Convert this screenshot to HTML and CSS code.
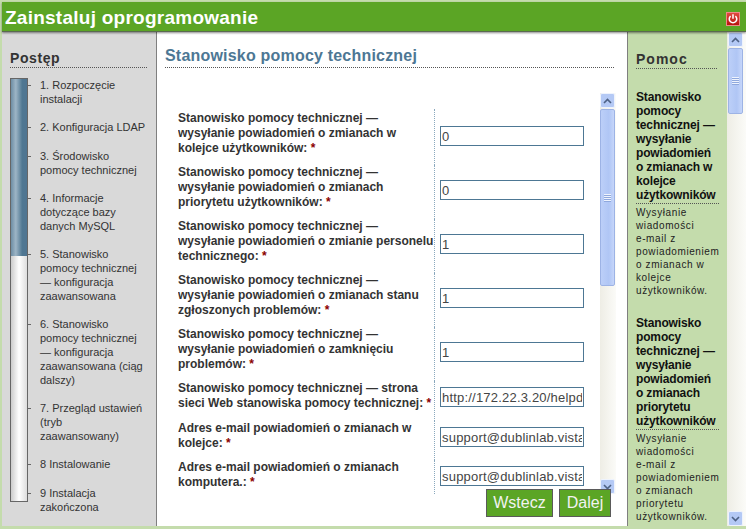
FILE: index.html
```html
<!DOCTYPE html>
<html lang="pl">
<head>
<meta charset="utf-8">
<title>Zainstaluj oprogramowanie</title>
<link rel="stylesheet" href="styles.css">
</head>
<body>
<div class="app">
  <header class="top">
    <h1>Zainstaluj oprogramowanie</h1>
    <span class="power">
      <svg viewBox="0 0 14 14" width="14" height="14"><path d="M4.2 3.6a4.4 4.4 0 1 0 5.6 0" fill="none" stroke="#fff" stroke-width="1.8"/><path d="M7 1.6v5" stroke="#fff" stroke-width="1.8"/></svg>
    </span>
  </header>
  <div class="columns">
    <aside class="progress">
      <h2 class="side-title">Postęp</h2>
      <div class="progress-body">
        <div class="bar"><div class="bar-fill"></div></div>
        <ol class="steps">
          <li class="s1">1. Rozpoczęcie instalacji</li>
          <li class="s2">2. Konfiguracja LDAP</li>
          <li class="s3">3. Środowisko pomocy technicznej</li>
          <li class="s4">4. Informacje dotyczące bazy danych MySQL</li>
          <li class="s5">5. Stanowisko pomocy technicznej — konfiguracja zaawansowana</li>
          <li class="s6">6. Stanowisko pomocy technicznej — konfiguracja zaawansowana (ciąg dalszy)</li>
          <li class="s7">7. Przegląd ustawień<br>(tryb<br>zaawansowany)</li>
          <li class="s8">8 Instalowanie</li>
          <li class="s9">9 Instalacja zakończona</li>
        </ol>
      </div>
    </aside>
    <main class="main">
      <h2 class="main-title">Stanowisko pomocy technicznej</h2>
      <div class="form-area">
        <div class="form">
          <div class="row r3"><label>Stanowisko pomocy technicznej — wysyłanie powiadomień o zmianach w kolejce użytkowników: <b>*</b></label><div class="cell"><input value="0"></div></div>
          <div class="row r3"><label>Stanowisko pomocy technicznej — wysyłanie powiadomień o zmianach priorytetu użytkowników: <b>*</b></label><div class="cell"><input value="0"></div></div>
          <div class="row r3"><label>Stanowisko pomocy technicznej — wysyłanie powiadomień o zmianie personelu technicznego: <b>*</b></label><div class="cell"><input value="1"></div></div>
          <div class="row r3"><label>Stanowisko pomocy technicznej — wysyłanie powiadomień o zmianach stanu zgłoszonych problemów: <b>*</b></label><div class="cell"><input value="1"></div></div>
          <div class="row r3"><label>Stanowisko pomocy technicznej — wysyłanie powiadomień o zamknięciu problemów: <b>*</b></label><div class="cell"><input value="1"></div></div>
          <div class="row r2"><label>Stanowisko pomocy technicznej — strona sieci Web stanowiska pomocy technicznej: <b>*</b></label><div class="cell"><input value="http://172.22.3.20/helpdesk"></div></div>
          <div class="row r2 tight"><label>Adres e-mail powiadomień o zmianach w kolejce: <b>*</b></label><div class="cell"><input value="support@dublinlab.vistaprint.net"></div></div>
          <div class="row r2"><label>Adres e-mail powiadomień o zmianach komputera.: <b>*</b></label><div class="cell"><input value="support@dublinlab.vistaprint.net"></div></div>
        </div>
        <div class="scrollbar form-scroll">
          <span class="sb-btn"><svg viewBox="0 0 9 6" width="9" height="6"><path d="M1 5l3.5-3.5L8 5" fill="none" stroke="#4D6185" stroke-width="1.6"/></svg></span>
          <span class="sb-thumb thumb-form"><i class="grip"></i></span>
          <span class="sb-rest"></span>
          <span class="sb-btn"><svg viewBox="0 0 9 6" width="9" height="6"><path d="M1 1l3.5 3.5L8 1" fill="none" stroke="#4D6185" stroke-width="1.6"/></svg></span>
        </div>
      </div>
      <div class="actions">
        <button class="btn back">Wstecz</button>
        <button class="btn next">Dalej</button>
      </div>
    </main>
    <aside class="help">
      <div class="help-text">
        <h2 class="side-title help-title">Pomoc</h2>
        <h3>Stanowisko pomocy technicznej — wysyłanie powiadomień o zmianach w kolejce użytkowników</h3>
        <p>Wysyłanie wiadomości <span class="nb">e-mail z</span> powiadomieniem o zmianach w kolejce użytkowników.</p>
        <h3>Stanowisko pomocy technicznej — wysyłanie powiadomień o zmianach priorytetu użytkowników</h3>
        <p>Wysyłanie wiadomości <span class="nb">e-mail z</span> powiadomieniem o zmianach priorytetu użytkowników.</p>
      </div>
      <div class="scrollbar help-scroll">
        <span class="sb-btn"><svg viewBox="0 0 9 6" width="9" height="6"><path d="M1 5l3.5-3.5L8 5" fill="none" stroke="#4D6185" stroke-width="1.6"/></svg></span>
        <span class="sb-thumb thumb-help"><i class="grip"></i></span>
        <span class="sb-rest"></span>
        <span class="sb-btn"><svg viewBox="0 0 9 6" width="9" height="6"><path d="M1 1l3.5 3.5L8 1" fill="none" stroke="#4D6185" stroke-width="1.6"/></svg></span>
      </div>
    </aside>
  </div>
</div>
</body>
</html>
```
FILE: styles.css
```css
* { box-sizing: border-box; }
html, body { margin: 0; padding: 0; }
body { width: 746px; height: 529px; overflow: hidden; background: #C4DCAC; font-family: "Liberation Sans", Arial, sans-serif; }
.app { width: 746px; height: 529px; padding: 2px 0 3px 2px; display: flex; flex-direction: column; }
.top { height: 30px; background: #5BA525; border-bottom: 1px solid #5a6a50; box-shadow: 0 1px 2px rgba(0,0,0,.45); display: flex; justify-content: space-between; align-items: flex-start; position: relative; z-index: 2; flex: none; }
.top h1 { margin: 5px 0 0 3px; font-size: 19px; line-height: 22px; font-weight: bold; color: #fff; letter-spacing: .25px; }
.power { width: 14px; height: 14px; margin: 10px 6px 0 0; background: linear-gradient(#E04A40, #B8140F); border: 1px solid #E88; display: flex; align-items: center; justify-content: center; }
.power svg { width: 12px; height: 12px; }
.columns { flex: 1; display: flex; min-height: 0; }
.progress { width: 155px; background: #D9D9D9; border-right: 1px solid #7f7f7f; padding: 18px 9px 0 8px; flex: none; }
.side-title { margin: 0; font-size: 14px; line-height: 17px; font-weight: bold; color: #333; letter-spacing: .6px; border-bottom: 1px dotted #555; height: 18px; }
.progress-body { display: flex; margin-top: 10px; }
.bar { width: 18px; height: 424px; border: 1px solid #666; background: linear-gradient(90deg, #ccc, #fff 50%, #ddd); flex: none; }
.bar-fill { height: 177px; background: linear-gradient(90deg, #6E8EA5, #9DB5C6 30%, #4F7792 70%, #4F7592); }
.steps { list-style: none; margin: 0; padding: 0 0 0 12px; font-size: 11px; line-height: 14px; color: #333; flex: 1; }
.steps li { position: relative; width: 108px; }
.steps li::before { content: ""; position: absolute; left: -12px; top: 7px; width: 3px; height: 1px; background: #666; }
.s2, .s4, .s5, .s6, .s7, .s8 { margin-top: 14px; }
.s3, .s9 { margin-top: 15px; }
.main { width: 470px; background: #fff; flex: none; position: relative; padding: 14px 13px 0 8px; }
.main-title { margin: 0; font-size: 16px; line-height: 20px; height: 22px; font-weight: bold; color: #4D7794; letter-spacing: .2px; border-bottom: 1px dotted #555; }
.form-area { display: flex; margin-top: 25px; height: 401px; padding-left: 13px; }
.form { width: 421px; height: 401px; overflow: hidden; padding-top: 16px; flex: none; }
.row { display: flex; }
.r3 { height: 54px; }
.r2 { height: 40px; }
.tight { height: 39px; }
.row:first-child { height: 56px; }
.row:first-child label { padding-top: 2px; }
.row:first-child .cell { padding-top: 17px; }
.row label { width: 256px; font-size: 12px; line-height: 15px; font-weight: bold; color: #333; flex: none; }
.row label b { color: #8B0000; }
.cell { width: 165px; border-left: 1px dotted #8aa8bd; padding: 6px 0 0 5px; }
.r3 .cell { padding-top: 15px; }
.cell input { display: block; width: 144px; height: 20px; border: 1px solid #4D7794; padding: 0 1px; font: 13px "Liberation Sans", Arial, sans-serif; letter-spacing: .2px; color: #444; background: #fff; outline: 0; }
.scrollbar { width: 16px; display: flex; flex-direction: column; background: linear-gradient(90deg, #EEEDE5, #FBFBF8); flex: none; }
.form-scroll { margin-left: 1px; height: 401px; }
.sb-btn { width: 15px; height: 15px; border: 1px solid #EEF3FD; background: #B4C9F5; display: flex; align-items: center; justify-content: center; flex: none; border-radius: 2px; }
.sb-thumb { width: 15px; background: linear-gradient(90deg, #BCCFF8, #B0C6F5 60%, #C6D6FA); border: 1px solid #9DB3E5; display: flex; align-items: center; justify-content: center; flex: none; border-radius: 2px; }
.thumb-form { height: 177px; margin-top: 1px; }
.thumb-help { height: 66px; margin-top: 1px; }
.grip { width: 7px; height: 8px; background: repeating-linear-gradient(#EEF3FD 0 1px, #8FA8DD 1px 2px); }
.sb-rest { flex: 1; }
.actions { position: absolute; left: 329px; top: 457px; display: flex; gap: 6px; }
.btn { height: 28px; background: #5BA525; color: #f2f2f2; border: 1px solid #5a5a5a; outline: 0; font: 16px "Liberation Sans", Arial, sans-serif; padding: 0; }
.back { width: 67px; }
.next { width: 52px; }
.help { width: 117px; flex: none; background: #C4DCAC; border-left: 1px solid #7f7f7f; display: flex; }
.help-text { width: 99px; padding: 19px 5px 0 8px; overflow: hidden; flex: none; height: 100%; }
.help-title { letter-spacing: 1px; color: #333; width: 81px; margin-bottom: 21px; }
.help h3 { margin: 0; font-size: 12px; line-height: 14px; font-weight: bold; color: #111; width: 83px; border-bottom: 1px dotted #555; padding-bottom: 1px; letter-spacing: -.15px; }
.help p { margin: 2px 0 19px; font-size: 10px; line-height: 13px; letter-spacing: .6px; color: #222; width: 84px; }
.nb { white-space: nowrap; }
.help-scroll { width: 19px; height: 100%; padding: 0 2px 0 1px; flex: none; }
```
